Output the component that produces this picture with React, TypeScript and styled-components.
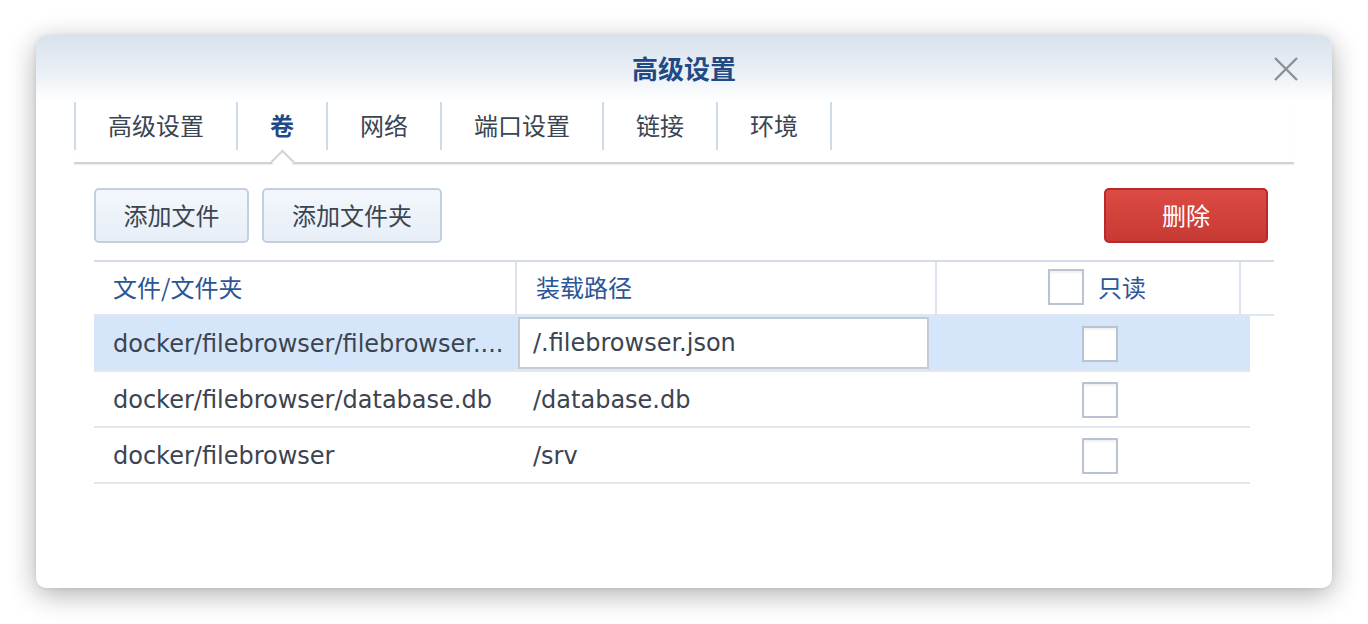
import React from "react";
import styled, { createGlobalStyle } from "styled-components";

const Global = createGlobalStyle`
  html, body { margin: 0; padding: 0; background: #ffffff; }
  body { font-family: "DejaVu Sans", "Noto Sans CJK SC", sans-serif; }
  * { box-sizing: border-box; }
`;

const Page = styled.div`
  width: 1368px;
  height: 624px;
  padding: 36px 36px 0 36px;
`;

const Dialog = styled.div`
  width: 1296px;
  height: 552px;
  background: #ffffff;
  border-radius: 10px;
  box-shadow: 0 6px 28px rgba(0, 0, 0, 0.32), 0 0 4px rgba(0, 0, 0, 0.08);
  overflow: hidden;
  display: flex;
  flex-direction: column;
`;

const Header = styled.div`
  position: relative;
  height: 66px;
  display: flex;
  align-items: center;
  justify-content: center;
  background: linear-gradient(to bottom, #d9e2ed 0%, #e8eef5 50%, #ffffff 100%);
`;

const Title = styled.div`
  font-family: "Noto Sans CJK SC", sans-serif;
  font-size: 26px;
  font-weight: 700;
  color: #1e4a86;
  margin-bottom: 3px;
`;

const Close = styled.button`
  position: absolute;
  right: 32px;
  top: 20px;
  width: 28px;
  height: 26px;
  padding: 0;
  border: 0;
  background: transparent;
  display: flex;
  align-items: center;
  justify-content: center;
`;

const TabBar = styled.div`
  margin: 0 38px;
  padding-bottom: 12px;
  display: flex;
  border-bottom: 2px solid #cfd2d6;
  box-shadow: 0 1px 1px rgba(0, 0, 0, 0.06);
  height: 62px;
`;

const Tab = styled.div<{ $active?: boolean; $first?: boolean }>`
  position: relative;
  height: 48px;
  padding: 0 32px 3px 32px;
  display: flex;
  align-items: center;
  border-right: 2px solid #cfdbe8;
  border-left: ${(p) => (p.$first ? "2px solid #cfdbe8" : "none")};
  font-family: "Noto Sans CJK SC", sans-serif;
  font-size: 24px;
  font-weight: ${(p) => (p.$active ? 700 : 400)};
  color: ${(p) => (p.$active ? "#1e4a86" : "#3b4552")};
  white-space: nowrap;
`;

const Caret = styled.span`
  position: absolute;
  left: 50%;
  top: 51px;
  width: 17px;
  height: 17px;
  margin-left: -8.5px;
  background: #ffffff;
  border-top: 2px solid #cfd2d6;
  border-left: 2px solid #cfd2d6;
  transform: rotate(45deg);
`;

const Panel = styled.div`
  padding: 24px 58px 0 58px;
  display: flex;
  flex-direction: column;
`;

const Toolbar = styled.div`
  display: flex;
  align-items: center;
  justify-content: space-between;
  padding-right: 6px;
`;

const ButtonGroup = styled.div`
  display: flex;
  gap: 13px;
`;

const Button = styled.button<{ $w: number; $danger?: boolean }>`
  width: ${(p) => p.$w}px;
  height: 55px;
  border-radius: 5px;
  font-family: "Noto Sans CJK SC", sans-serif;
  font-size: 24px;
  padding: 0 0 2px 0;
  border: 2px solid ${(p) => (p.$danger ? "#b8292b" : "#c4cfdc")};
  background: ${(p) =>
    p.$danger
      ? "linear-gradient(to bottom, #dc4a43, #c73a34)"
      : "linear-gradient(to bottom, #f3f7fd, #e8eef7)"};
  color: ${(p) => (p.$danger ? "#ffffff" : "#3b4552")};
`;

const Table = styled.div`
  margin-top: 17px;
  display: flex;
  flex-direction: column;
`;

const HeadRow = styled.div`
  width: 1180px;
  display: grid;
  grid-template-columns: 423px 420px 304px 33px;
  border-top: 2px solid #d3dce8;
  border-bottom: 2px solid #dfe6ef;
  height: 56px;
`;

const HeadCell = styled.div<{ $center?: boolean; $last?: boolean }>`
  display: flex;
  align-items: center;
  justify-content: ${(p) => (p.$center ? "center" : "flex-start")};
  padding-left: ${(p) => (p.$center ? "18px" : "19px")};
  padding-bottom: 3px;
  border-right: ${(p) => (p.$last ? "none" : "2px solid #dbe3ed")};
  font-family: "Noto Sans CJK SC", sans-serif;
  font-size: 24px;
  color: #2b5594;
  gap: 14px;
`;

const Row = styled.div<{ $selected?: boolean }>`
  width: 1156px;
  height: 56px;
  display: grid;
  grid-template-columns: 423px 420px 313px;
  background: ${(p) => (p.$selected ? "#d6e6fa" : "#ffffff")};
  border-bottom: 2px solid #e2e8f0;
`;

const Cell = styled.div<{ $pad?: number; $center?: boolean }>`
  display: flex;
  align-items: center;
  justify-content: ${(p) => (p.$center ? "center" : "flex-start")};
  padding-left: ${(p) => p.$pad ?? 19}px;
  padding-top: 1px;
  font-size: 24px;
  color: #3b4450;
  white-space: nowrap;
  overflow: hidden;
  text-overflow: ellipsis;
`;

const EditInput = styled.div`
  margin: 0 8px 1px 1px;
  height: 52px;
  width: 411px;
  border: 2px solid #c4cbd5;
  background: #ffffff;
  display: flex;
  align-items: center;
  padding-left: 13px;
  font-size: 24px;
  color: #3b4450;
`;

const Check = styled.span`
  display: inline-block;
  width: 36px;
  height: 36px;
  border: 2px solid #bac4d1;
  background: #ffffff;
  box-shadow: inset 0 2px 2px rgba(0, 0, 0, 0.06);
  flex: none;
`;

const tabs = ["高级设置", "卷", "网络", "端口设置", "链接", "环境"];

const rows = [
  { file: "docker/filebrowser/filebrowser....", mount: "/.filebrowser.json", selected: true },
  { file: "docker/filebrowser/database.db", mount: "/database.db" },
  { file: "docker/filebrowser", mount: "/srv" },
];

export default function App() {
  return (
    <>
      <Global />
      <Page>
        <Dialog>
          <Header>
            <Title>高级设置</Title>
            <Close aria-label="close">
              <svg width="26" height="24" viewBox="0 0 26 24">
                <path d="M2 1 L24 23 M24 1 L2 23" stroke="#8b9097" strokeWidth="2.4" fill="none" />
              </svg>
            </Close>
          </Header>
          <TabBar>
            {tabs.map((t, i) => (
              <Tab key={t} $active={i === 1} $first={i === 0}>
                {t}
                {i === 1 && <Caret />}
              </Tab>
            ))}
          </TabBar>
          <Panel>
            <Toolbar>
              <ButtonGroup>
                <Button $w={155}>添加文件</Button>
                <Button $w={180}>添加文件夹</Button>
              </ButtonGroup>
              <Button $w={164} $danger>
                删除
              </Button>
            </Toolbar>
            <Table>
              <HeadRow>
                <HeadCell>文件/文件夹</HeadCell>
                <HeadCell>装载路径</HeadCell>
                <HeadCell $center>
                  <Check />
                  只读
                </HeadCell>
                <HeadCell $last />
              </HeadRow>
              {rows.map((r) => (
                <Row key={r.file} $selected={r.selected}>
                  <Cell>{r.file}</Cell>
                  {r.selected ? (
                    <Cell $pad={0}>
                      <EditInput>{r.mount}</EditInput>
                    </Cell>
                  ) : (
                    <Cell $pad={16}>{r.mount}</Cell>
                  )}
                  <Cell $center $pad={12}>
                    <Check />
                  </Cell>
                </Row>
              ))}
            </Table>
          </Panel>
        </Dialog>
      </Page>
    </>
  );
}
